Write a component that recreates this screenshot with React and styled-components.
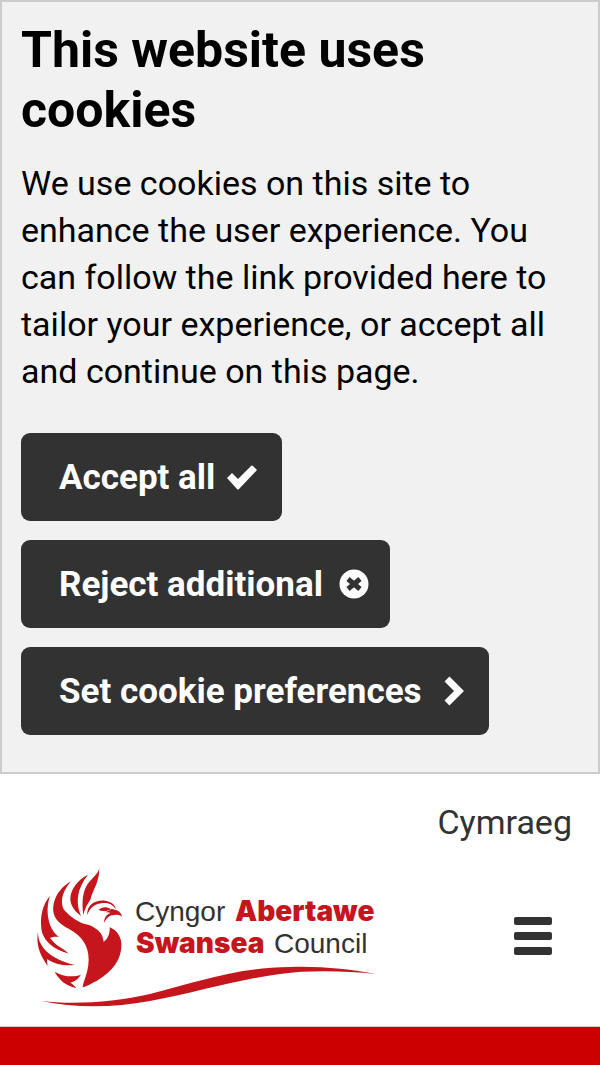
import React from 'react'
import styled, { createGlobalStyle } from 'styled-components'

const App = () => {
  return (
    <>
      <GlobalStyle />
      <CookieBanner aria-label="Cookies">
        <BannerTitle>This website uses cookies</BannerTitle>
        <BannerText>
          We use cookies on this site to enhance the user experience. You can
          follow the link provided here to tailor your experience, or accept all
          and continue on this page.
        </BannerText>
        <Actions>
          <ActionButton type="button">
            Accept all <CheckIcon />
          </ActionButton>
          <ActionButton type="button">
            Reject additional <CrossIcon />
          </ActionButton>
          <ActionButton type="button">
            Set cookie preferences <ChevronIcon />
          </ActionButton>
        </Actions>
      </CookieBanner>
      <Header>
        <LanguageBar>
          <LanguageLink href="#cymraeg" lang="cy">Cymraeg</LanguageLink>
        </LanguageBar>
        <HeaderRow>
          <LogoLink href="#home" aria-label="Swansea Council home">
            <Logo />
          </LogoLink>
          <MenuButton type="button" aria-label="Menu">
            <MenuIcon />
          </MenuButton>
        </HeaderRow>
      </Header>
      <RedBar />
    </>
  )
}

const CheckIcon = () => (
  <Icon viewBox="0 0 46 30" aria-hidden="true">
    <path d="M12 16 L17 11 L23 17 L36 4 Q37 3 38 4 L42 8 L24 27 Q23 28 22 27 Z" fill="#fff" />
  </Icon>
)

const CrossIcon = () => (
  <Icon viewBox="0 0 46 30" aria-hidden="true">
    <circle cx="31" cy="15" r="14.5" fill="#fff" />
    <path d="M25 10 L37 20 M37 10 L25 20" stroke="#323232" strokeWidth="5" />
  </Icon>
)

const ChevronIcon = () => (
  <Icon viewBox="0 0 46 30" aria-hidden="true">
    <path d="M25 3 L37 15 L25 27" fill="none" stroke="#fff" strokeWidth="7" />
  </Icon>
)

const MenuIcon = () => (
  <svg width="38" height="38" viewBox="0 0 38 38" aria-hidden="true">
    <rect width="38" height="8" rx="2" fill="#323232" />
    <rect y="15" width="38" height="8" rx="2" fill="#323232" />
    <rect y="30" width="38" height="8" rx="2" fill="#323232" />
  </svg>
)

const Logo = () => (
  <LogoSvg viewBox="36 865 342 142" role="img" aria-label="Cyngor Abertawe Swansea Council">
    <g transform="translate(20 860) scale(0.3333)" fill="#c4161c">
      <path d="M153 64 C119 83 94 120 101 160 C107 190 142 203 165 218 C193 238 211 270 205 315 C201 345 190 365 188 382 C213 374 214 370 230 363 C266 340 300 313 304 262 C307 232 290 210 269 202 C270 222 264 236 251 246 C249 224 238 212 224 204 C211 194 198 194 187 190 C166 180 143 164 130 146 C119 119 132 88 153 64 Z" />
      <path d="M204 44 C174 58 149 91 151 120 C154 144 169 157 183 168 C166 128 170 87 204 44 Z" />
      <path d="M238 25 C234 42 219 52 203 72 C188 96 185 124 190 165 C194 145 203 132 212 117 C218 90 238 69 238 25 Z" />
      <path d="M90 108 C68 133 60 168 64 205 C68 244 104 270 147 281 C133 268 117 262 104 250 C98 243 95 239 90 234 C100 230 108 230 117 231 C88 211 73 158 90 108 Z" />
      <path d="M54 215 C48 251 57 282 83 318 C82 309 80 303 82 298 C107 315 137 318 164 315 C126 307 78 284 63 253 C56 240 54 229 54 215 Z" />
      <path d="M104 335 C118 362 142 379 169 384 C164 378 158 372 151 368 C165 364 177 355 183 344 C160 353 128 350 104 335 Z" />
      <path d="M202 166 C199 134 227 119 255 122 C275 125 287 135 287 148 C278 131 263 128 248 129 C226 131 209 142 202 166 Z" />
      <path d="M236 149 C246 140 260 139 272 147 C266 154 246 156 236 149 Z" />
      <path d="M274 146 C289 150 303 152 306 170 C297 163 287 164 276 166 C265 168 258 178 252 189 C252 173 260 163 272 159 C266 157 258 157 250 156 C262 155 270 152 274 146 Z" />
    </g>
    <path d="M41 1001 C75 1005 115 1002 150 994 C195 983 233 968 290 967 C320 966 350 969 376 974 C345 971 310 970 280 974 C235 980 195 993 150 1001 C112 1008 75 1008 41 1001 Z" fill="#c4161c" />
    <LogoText x="135" y="921">Cyngor</LogoText>
    <LogoText x="235" y="921" $strong>Abertawe</LogoText>
    <LogoText x="136" y="953" $strong>Swansea</LogoText>
    <LogoText x="274" y="953">Council</LogoText>
  </LogoSvg>
)

export default App

const GlobalStyle = createGlobalStyle`
  * {
    box-sizing: border-box;
  }

  body {
    margin: 0;
    background: #fff;
    color: #000;
    font-family: Roboto, "Liberation Sans", sans-serif;
    font-size: 34px;
  }
`

const CookieBanner = styled.section`
  padding: 18px 19px 37px;
  border: 2px solid #ccc;
  background: #f1f1f1;
`

const BannerTitle = styled.h2`
  margin: 0 0 20px;
  font-size: 50px;
  font-weight: bold;
  line-height: 60px;
`

const BannerText = styled.p`
  margin: 0;
  line-height: 47px;
`

const Actions = styled.div`
  display: flex;
  flex-direction: column;
  align-items: flex-start;
  gap: 19px;
  margin-top: 38px;
`

const ActionButton = styled.button`
  display: inline-flex;
  align-items: center;
  min-height: 88px;
  padding: 0 21px 0 38px;
  border: 0;
  border-radius: 9px;
  background: #323232;
  color: #fff;
  font-family: inherit;
  font-size: 35px;
  font-weight: bold;
  cursor: pointer;
`

const Icon = styled.svg`
  flex: none;
  width: 46px;
  height: 30px;
`

const Header = styled.header`
  padding: 24px 20px 19px;
`

const LanguageBar = styled.div`
  display: flex;
  justify-content: flex-end;
  padding-right: 8px;
`

const LanguageLink = styled.a`
  color: #323232;
  line-height: 48px;
  text-decoration: none;
`

const HeaderRow = styled.div`
  display: flex;
  justify-content: space-between;
  align-items: center;
  margin-top: 19px;
  padding: 0 28px 0 16px;
`

const LogoLink = styled.a`
  display: block;
`

const LogoSvg = styled.svg`
  display: block;
  width: 342px;
  height: 142px;
`

const LogoText = styled.text`
  font-family: ${ props => props.$strong ? 'Inter' : '"Liberation Sans"' }, sans-serif;
  font-size: 28px;
  font-weight: ${ props => props.$strong ? 900 : 400 };
  fill: ${ props => props.$strong ? '#c4161c' : '#323232' };
`

const MenuButton = styled.button`
  display: flex;
  padding: 0;
  border: 0;
  background: none;
  cursor: pointer;
`

const RedBar = styled.div`
  min-height: 39px;
  border-top: 1px solid #ccc;
  background: #c00;
`
